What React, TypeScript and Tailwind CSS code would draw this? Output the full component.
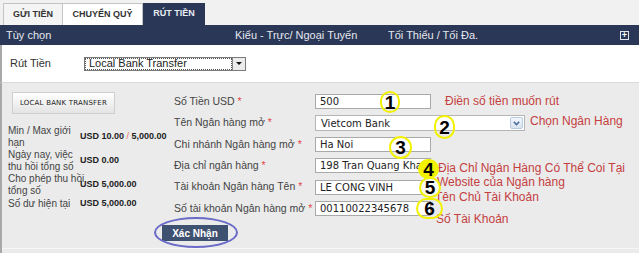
import React from 'react';

const navy = 'bg-[#2b3756]';

const Req = () => <span className="text-[#e0484c]"> *</span>;

const Circle = ({ n, className }: { n: string; className: string }) => (
  <div
    className={`absolute flex items-center justify-center rounded-full border-2 border-[#f2f200] font-['Liberation_Sans',sans-serif] text-[19px] font-bold leading-none text-black ${className}`}
  >
    {n}
  </div>
);

const Note = ({ children, className }: { children: React.ReactNode; className: string }) => (
  <div className={`absolute whitespace-nowrap text-[12px] leading-none text-[#c4403f] ${className}`}>
    {children}
  </div>
);

const fields = [
  { label: 'Số Tiền USD', value: '500', w: 'w-[116px]' },
  { label: 'Tên Ngân hàng mở', value: 'Vietcom Bank', select: true },
  { label: 'Chi nhánh Ngân hàng mở', value: 'Ha Noi', w: 'w-[116px]' },
  { label: 'Địa chỉ ngân hàng', value: '198 Tran Quang Khai', w: 'w-[116px]' },
  { label: 'Tài khoản Ngân hàng Tên', value: 'LE CONG VINH', w: 'w-[116px]' },
  { label: 'Số tài khoản Ngân hàng mở', value: '00110022345678', w: 'w-[116px]' },
];

const stats = [
  { label: ['Min / Max giới', 'hạn'], value: <>USD 10.00 <span className="text-[#e46a6a] font-normal">/</span> 5,000.00</> },
  { label: ['Ngày nay, việc', 'thu hồi tổng số'], value: <>USD 0.00</> },
  { label: ['Cho phép thu hồi', 'tổng số'], value: <>USD 5,000.00</> },
  { label: ['Số dư hiện tại'], value: <>USD 5,000.00</> },
];

export default function App() {
  return (
    <div className="w-[639px] h-[253px] overflow-hidden bg-[#ebebeb] font-['Liberation_Sans',Arial,sans-serif] text-[#333]">
      {/* Tabs */}
      <div className="flex h-[25px] items-end bg-[#f1f1f1] pl-[3px]">
        <div className="flex h-[22px] w-[60px] items-center justify-center border border-b-0 border-[#c4c4c4] bg-[#f4f4f4] text-[9px] font-bold text-[#333]">
          GỬI TIỀN
        </div>
        <div className="flex h-[22px] w-[80px] items-center justify-center border border-b-0 border-l-0 border-[#c4c4c4] bg-white text-[9px] font-bold text-[#333]">
          CHUYỂN QUỸ
        </div>
        <div className={`flex h-[22px] w-[62px] items-center justify-center ${navy} text-[9px] font-bold text-[#e8ecf4]`}>
          RÚT TIỀN
        </div>
      </div>

      {/* Header bar */}
      <div className={`flex h-[20px] items-center ${navy} text-[11px] text-[#e4e8f0]`}>
        <div className="w-[235px] pl-[6px]">Tùy chọn</div>
        <div className="w-[153px]">Kiểu - Trực/ Ngoại Tuyến</div>
        <div className="flex-1">Tối Thiểu / Tối Đa.</div>
        <div className="mr-[10px] flex h-[9px] w-[9px] items-center justify-center border border-[#dfe3ea] bg-[#2b3756] text-[9px] font-bold leading-none text-white">
          +
        </div>
      </div>

      {/* Withdraw method */}
      <div className="flex h-[37px] items-center border-l-2 border-[#a8a8a8] bg-white pl-[8px]">
        <div className="w-[74px] text-[11px] text-[#333]">Rút Tiền</div>
        <div className="flex h-[14px] w-[162px] items-center border border-[#7a7a7a] bg-white">
          <div className="flex h-[12px] flex-1 items-center border border-dotted border-[#555] pl-[3px] text-[11px] leading-none text-[#222]">
            Local Bank Transfer
          </div>
          <div className="flex h-[12px] w-[13px] items-center justify-center border-l border-[#888] bg-[#ececec]">
            <div className="h-0 w-0 border-x-[3px] border-t-[3px] border-x-transparent border-t-[#111]" />
          </div>
        </div>
      </div>

      {/* Main */}
      <div className="relative flex h-[171px] border-l-2 border-t border-[#a8a8a8] border-t-[#dadada]">
        <div className="w-[158px] shrink-0 pl-[6px] pt-[9px]">
          <div className="ml-[4px] flex h-[22px] w-[103px] items-center justify-center border border-[#cfcfcf] bg-gradient-to-b from-white to-[#e4e4e4] font-['DejaVu_Sans',sans-serif] text-[7px] tracking-[0.2px] text-[#222]">
            LOCAL BANK TRANSFER
          </div>
          <div className="mt-[11px] flex flex-col gap-y-[1px]">
            {stats.map((s, i) => (
              <div key={i} className="flex items-center">
                <div className="w-[72px] shrink-0 whitespace-nowrap text-[10px] leading-[11.5px] text-[#444]">
                  {s.label.map((l, j) => (
                    <div key={j}>{l}</div>
                  ))}
                </div>
                <div className="whitespace-nowrap text-[9px] font-bold text-[#222]">{s.value}</div>
              </div>
            ))}
          </div>
        </div>

        <div className="flex-1 pl-[14px] pt-[8px]">
          {fields.map((f, i) => (
            <div key={i} className="flex h-[21.4px] items-center">
              <div className="w-[141px] shrink-0 whitespace-nowrap text-[10.5px] text-[#444]">
                {f.label}
                <Req />
              </div>
              {f.select ? (
                <div className="flex h-[16px] w-[210px] items-center justify-between border border-[#b5b5b5] bg-white pl-[5px] font-['DejaVu_Sans',sans-serif] text-[10px] text-[#222]">
                  {f.value}
                  <div className="mr-[1px] flex h-[12px] w-[13px] items-center justify-center rounded-[2px] border border-[#b9cbe0] bg-gradient-to-b from-[#f2f6fb] to-[#d8e3f0]">
                    <svg width="7" height="5" viewBox="0 0 7 5">
                      <path d="M0.8 0.8 L3.5 3.6 L6.2 0.8" fill="none" stroke="#4d6d9a" strokeWidth="1.6" />
                    </svg>
                  </div>
                </div>
              ) : (
                <div
                  className={`flex h-[15px] ${f.w} items-center overflow-hidden whitespace-nowrap border border-[#a9a9a9] bg-white pl-[4px] font-['DejaVu_Sans',sans-serif] text-[10px] text-[#222]`}
                >
                  {f.value}
                </div>
              )}
            </div>
          ))}
          <div className="relative ml-[-12px] mt-[6px] inline-block">
            <div className="flex h-[16px] w-[66px] items-center justify-center bg-[#3f5170] text-[10px] font-bold text-white">
              Xác Nhận
            </div>
            <div className="absolute left-[-8px] top-[-8px] h-[31px] w-[84px] rounded-[50%] border-2 border-[#6a6ac8]" />
          </div>
        </div>

        {/* Annotations */}
        <Note className="left-[443px] top-[12px]">Điền số tiền muốn rút</Note>
        <Note className="left-[528px] top-[32px]">Chọn Ngân Hàng</Note>
        <Note className="left-[436px] top-[79px]">Địa Chỉ Ngân Hàng Có Thể Coi Tại</Note>
        <Note className="left-[435px] top-[93px]">Website của Ngân hàng</Note>
        <Note className="left-[433px] top-[108px]">Tên Chủ Tài Khoản</Note>
        <Note className="left-[434px] top-[130px]">Số Tài Khoản</Note>

        <Circle n="1" className="left-[378px] top-[8px] h-[22px] w-[20px]" />
        <Circle n="2" className="left-[432px] top-[32px] h-[24px] w-[21px]" />
        <Circle n="3" className="left-[387px] top-[53px] h-[23px] w-[23px]" />
        <Circle n="4" className="left-[416px] top-[76px] h-[20px] w-[21px] bg-[#f2f200]" />
        <Circle n="5" className="left-[417px] top-[94px] h-[21px] w-[22px] bg-[#f8f8f0]" />
        <Circle n="6" className="left-[414px] top-[115px] h-[21px] w-[27px]" />

        <div className="absolute bottom-[4px] left-0 right-0 h-px bg-[#f6f6f6]" />
      </div>
    </div>
  );
}
